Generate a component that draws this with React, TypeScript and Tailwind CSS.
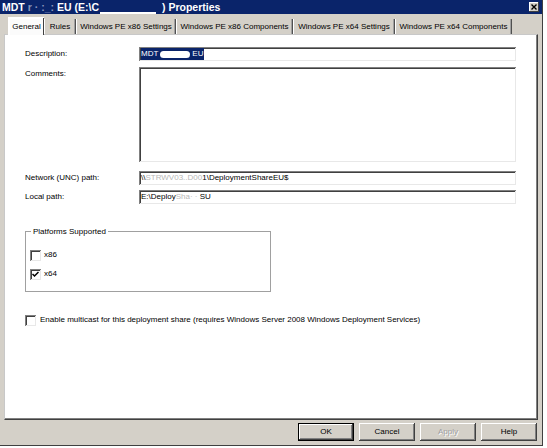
import React from 'react';

const raised =
  'bg-[#d4d0c8] shadow-[inset_-1px_-1px_#404040,inset_1px_1px_#ffffff,inset_-2px_-2px_#808080]';
const sunken =
  'bg-white shadow-[inset_1px_1px_#808080,inset_-1px_-1px_#e8e8e8,inset_2px_2px_#404040]';

function Field({ label, children, className = '' }: { label: string; children?: React.ReactNode; className?: string }) {
  return (
    <div className={`flex items-start ${className}`}>
      <div className="w-[114px] leading-[14px]">{label}</div>
      <div className={`w-[377px] h-[14px] ${sunken} px-[2px] leading-[14px] whitespace-nowrap overflow-hidden`}>
        {children}
      </div>
    </div>
  );
}

function CheckBox({ checked = false }: { checked?: boolean }) {
  return (
    <div className={`w-[11px] h-[11px] ${sunken} flex items-center justify-center`}>
      {checked && (
        <svg width="7" height="7" viewBox="0 0 7 7">
          <path d="M0.5 3 L2.5 5 L6.5 1" stroke="#000" strokeWidth="1.5" fill="none" />
        </svg>
      )}
    </div>
  );
}

export default function App() {
  const tabs = [
    { name: 'General', w: 'w-[36px]' },
    { name: 'Rules', w: 'w-[32px]' },
    { name: 'Windows PE x86 Settings', w: 'w-[100px]' },
    { name: 'Windows PE x86 Components', w: 'w-[117px]' },
    { name: 'Windows PE x64 Settings', w: 'w-[102px]' },
    { name: 'Windows PE x64 Components', w: 'w-[117px]' },
  ];

  return (
    <div className="w-[547px] h-[448px] flex bg-white overflow-hidden text-[8px] text-black font-['Liberation_Sans',Arial,sans-serif]">
      <div className="w-[543px] h-[446px] bg-[#d4d0c8] flex flex-col border-r border-b border-[#404040]">
        {/* title bar */}
        <div className="h-[14px] bg-[#0a246a] flex items-center pl-[2px] pr-[3px] text-white font-bold text-[10.5px] leading-[14px] whitespace-nowrap">
          <span>MDT</span>
          <span className="ml-[3px] text-[#8a96bd]">r · :_:</span>
          <span className="ml-[3px]">EU (E:\C</span>
          <span className="w-[56px] h-[14px] flex items-end ml-[1px]">
            <span className="w-full h-[2px] bg-white" />
          </span>
          <span className="ml-[6px]">) Properties</span>
          <div className="ml-auto w-[10px] h-[10px] bg-[#d4d0c8] shadow-[inset_-1px_-1px_#404040,inset_1px_1px_#ffffff] flex items-center justify-center">
            <svg width="6" height="6" viewBox="0 0 6 6">
              <path d="M0.5 0.5 L5.5 5.5 M5.5 0.5 L0.5 5.5" stroke="#000" strokeWidth="1.4" />
            </svg>
          </div>
        </div>

        {/* tabs */}
        <div className="h-[20px] flex items-end pl-[8px]">
          {tabs.map((t, i) =>
            i === 0 ? (
              <div
                key={t.name}
                className={`${t.w} h-[18px] bg-[#fbfbfb] border-l border-t border-white shadow-[inset_-1px_0_#404040,inset_1px_1px_#ffffff] flex items-center justify-center -mb-px relative z-10`}
              >
                {t.name}
              </div>
            ) : (
              <div
                key={t.name}
                className={`${t.w} h-[15px] border-r border-[#505050] shadow-[inset_-1px_0_#a0a0a0] border-l border-l-white flex items-center justify-center whitespace-nowrap`}
              >
                {t.name}
              </div>
            )
          )}
        </div>

        {/* panel */}
        <div className="ml-[4px] w-[534px] h-[386px] bg-white border-l border-t border-[#c8c8c8] shadow-[inset_-1px_-1px_#808080] border-r border-b border-r-[#404040] border-b-[#404040] flex flex-col pl-[20px]">
          <Field label="Description:" className="mt-[12px]">
            <span className="bg-[#0a246a] text-white pr-[1px] inline-flex items-center h-[12px]">
              MDT <span className="inline-block w-[30px] h-[7px] bg-white rounded-full mx-[2px]" />EU
            </span>
          </Field>

          <div className="flex items-start mt-[6px]">
            <div className="w-[114px] leading-[14px]">Comments:</div>
            <div className={`w-[377px] h-[95px] ${sunken}`} />
          </div>

          <Field label="Network (UNC) path:" className="mt-[9px]">
            \\<span className="text-[#b8b8b8]">STRWV03..D00</span>1\DeploymentShareEU$
          </Field>
          <Field label="Local path:" className="mt-[5px]">
            E:\Deploy<span className="text-[#b8b8b8]">Sha· ·</span> SU
          </Field>

          <fieldset className="mt-[22px] w-[246px] h-[66px] border border-[#a0a0a0] shadow-[1px_1px_#ffffff] px-0 pb-0">
            <legend className="ml-[5px] px-[2px] leading-[11px]">Platforms Supported</legend>
            <div className="flex flex-col pl-[4px] pt-[12px] gap-[7px]">
              <div className="flex items-center gap-[3px]">
                <CheckBox />
                <span>x86</span>
              </div>
              <div className="flex items-center gap-[3px]">
                <CheckBox checked />
                <span>x64</span>
              </div>
            </div>
          </fieldset>

          <div className="flex items-center gap-[4px] mt-[22px]">
            <CheckBox />
            <span>Enable multicast for this deployment share (requires Windows Server 2008 Windows Deployment Services)</span>
          </div>
        </div>

        {/* buttons */}
        <div className="flex justify-end gap-[5px] pr-[5px] pt-[3px]">
          <div className={`w-[56px] h-[18px] ${raised} border border-black flex items-center justify-center`}>OK</div>
          <div className={`w-[56px] h-[18px] ${raised} flex items-center justify-center`}>Cancel</div>
          <div className={`w-[56px] h-[18px] ${raised} flex items-center justify-center text-[#a0a0a0] [text-shadow:1px_1px_#ffffff]`}>Apply</div>
          <div className={`w-[56px] h-[18px] ${raised} flex items-center justify-center`}>Help</div>
        </div>
      </div>
      <div className="flex-1 bg-white" />
    </div>
  );
}
